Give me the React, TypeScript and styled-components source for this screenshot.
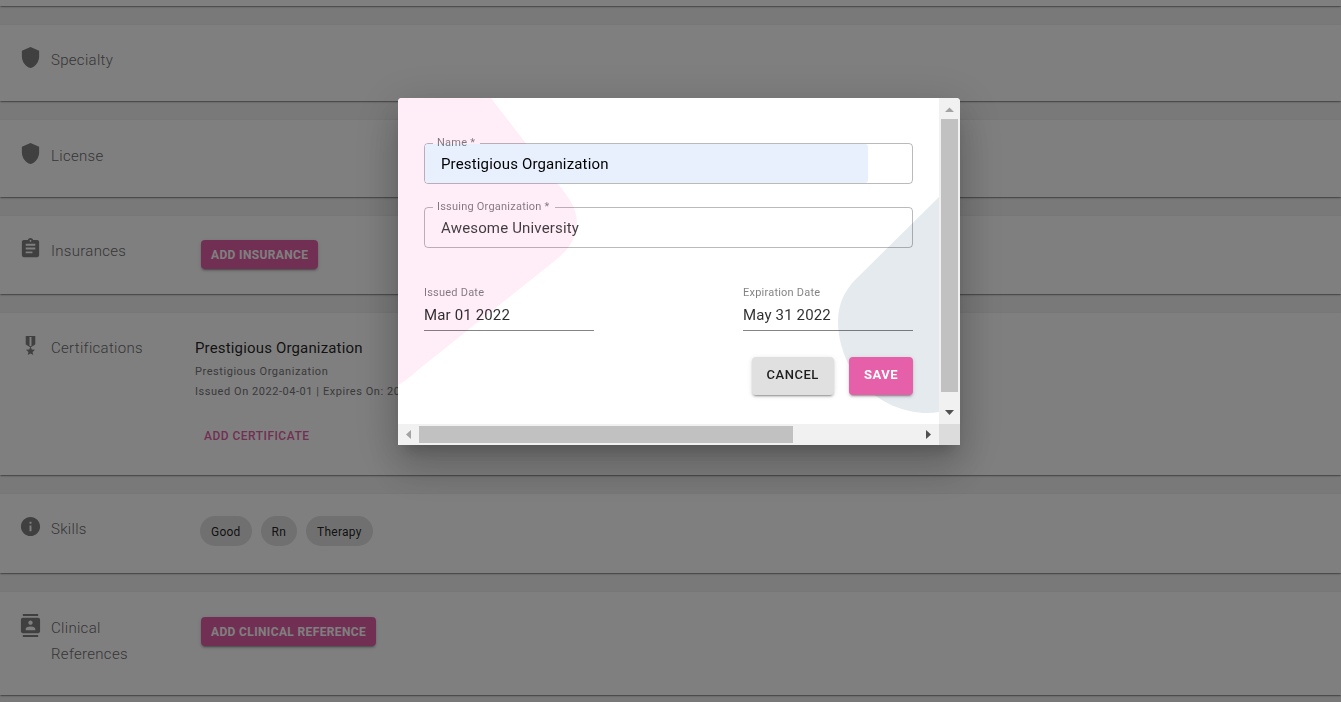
import React from "react";
import styled, { createGlobalStyle } from "styled-components";
import { MdAssignment, MdContacts, MdInfo, MdMilitaryTech, MdShield } from "react-icons/md";

const GlobalStyle = createGlobalStyle`
  *, *::before, *::after { box-sizing: border-box; }
  html, body, #root { height: 100%; }
  body {
    margin: 0;
    overflow: hidden;
    background: #f3f3f3;
    color: rgba(0, 0, 0, 0.87);
    font-family: Roboto, "Liberation Sans", sans-serif;
    letter-spacing: 0.01em;
  }
  button, input { font-family: inherit; letter-spacing: inherit; }
`;

const Page = styled.main`
  display: flex;
  flex-direction: column;
  gap: 19px;
  height: 100vh;
  overflow: hidden;
`;

const Card = styled.section<{ $height: number; $inset?: number }>`
  display: grid;
  grid-template-columns: 20px 133px 1fr;
  column-gap: 11px;
  align-items: start;
  flex: none;
  min-height: ${(p) => p.$height}px;
  padding: ${(p) => p.$inset ?? 0}px 20px 0;
  background: #fff;
  box-shadow: 0 2px 1px -1px rgba(0, 0, 0, 0.2), 0 1px 1px rgba(0, 0, 0, 0.14),
    0 1px 3px rgba(0, 0, 0, 0.12);
`;

const IconSlot = styled.span`
  display: flex;
  justify-content: center;
  color: #808080;
  svg { flex: none; width: 23px; height: 23px; }
`;

const CardTitle = styled.h2`
  margin: 0;
  padding: 1px 30px 0 0;
  color: #6c6c6c;
  font-size: 15px;
  font-weight: 300;
  letter-spacing: 0.02em;
  line-height: 26px;
`;

const CardBody = styled.div`
  padding-top: 1px;
`;

const SmallButton = styled.button`
  display: block;
  height: 29px;
  margin: 2px 0 0 6px;
  padding: 1px 10px 0;
  border: 0;
  border-radius: 4px;
  background: #e55fa9;
  color: #fff;
  font-size: 12px;
  font-weight: 700;
  letter-spacing: 0.03em;
  line-height: 28px;
  text-transform: uppercase;
  box-shadow: 0 3px 1px -2px rgba(0, 0, 0, 0.2), 0 2px 2px rgba(0, 0, 0, 0.14),
    0 1px 5px rgba(0, 0, 0, 0.12);
`;

const TextButton = styled.button`
  display: block;
  margin: 24px 0 0;
  padding: 0 9px;
  border: 0;
  background: none;
  color: #e55fa9;
  font-size: 12px;
  font-weight: 500;
  letter-spacing: 0.04em;
  line-height: 20px;
  text-transform: uppercase;
`;

const EntryName = styled.h3`
  margin: 2px 0 3px;
  font-size: 15px;
  font-weight: 400;
  line-height: 22px;
`;

const EntryLine = styled.p`
  margin: 0;
  color: #757575;
  font-size: 11px;
  font-weight: 400;
  letter-spacing: 0.05em;
  line-height: 20px;
  white-space: nowrap;
`;

const ChipList = styled.ul`
  display: flex;
  gap: 9px;
  margin: 0;
  padding: 0 0 0 5px;
  list-style: none;
`;

const Chip = styled.li`
  height: 30px;
  padding: 0 11px;
  border-radius: 15px;
  background: #e0e0e0;
  font-size: 12px;
  letter-spacing: 0.02em;
  line-height: 32px;
`;

const Backdrop = styled.div`
  position: fixed;
  inset: 0;
  display: flex;
  justify-content: center;
  align-items: flex-start;
  padding: 98px 0 0 17px;
  background: rgba(0, 0, 0, 0.5);
`;

const Dialog = styled.div`
  display: grid;
  grid-template-columns: minmax(0, 1fr) 21px;
  grid-template-rows: auto 21px;
  width: 562px;
  max-width: 96%;
  overflow: hidden;
  border-radius: 4px 4px 0 0;
  background: #fff;
  box-shadow: 0 11px 15px -7px rgba(0, 0, 0, 0.2),
    0 24px 38px 3px rgba(0, 0, 0, 0.14), 0 9px 46px 8px rgba(0, 0, 0, 0.12);
`;

const Form = styled.form`
  position: relative;
  display: flex;
  flex-direction: column;
  padding: 38px 26px 29px;
`;

const Backdrawing = styled.svg`
  position: absolute;
  inset: 0;
  width: 100%;
  height: 100%;
`;

const OutlinedField = styled.fieldset`
  position: relative;
  display: flex;
  height: 48px;
  margin: 0 0 16px;
  padding: 0 0 0 8px;
  border: 1px solid rgba(0, 0, 0, 0.27);
  border-radius: 4px;
`;

const FieldLegend = styled.legend`
  position: relative;
  z-index: 1;
  padding: 0 5px 0 4px;
  color: rgba(0, 0, 0, 0.5);
  font-size: 11px;
  letter-spacing: 0.02em;
  line-height: 14px;
`;

const FieldInput = styled.input<{ $autofilled?: boolean }>`
  flex: 1;
  min-width: 0;
  height: 39px;
  margin: -6px 44px 0 -8px;
  padding: 1px 16px 0;
  border: 0;
  border-radius: 3px;
  outline: 0;
  background: ${(p) => (p.$autofilled ? "#e8f0fe" : "transparent")};
  color: ${(p) => (p.$autofilled ? "#000" : "rgba(0, 0, 0, 0.75)")};
  font-size: 15px;
`;

const DateRow = styled.div`
  position: relative;
  display: flex;
  justify-content: space-between;
  margin-top: 22px;
`;

const DateField = styled.label`
  display: flex;
  flex-direction: column;
  width: 170px;
  color: rgba(0, 0, 0, 0.5);
  font-size: 11px;
  letter-spacing: 0.02em;
  line-height: 14px;
`;

const DateInput = styled.input`
  width: 100%;
  height: 31px;
  padding: 0;
  border: 0;
  border-bottom: 1px solid rgba(0, 0, 0, 0.48);
  outline: 0;
  background: transparent;
  color: rgba(0, 0, 0, 0.82);
  font-size: 15px;
  letter-spacing: 0.01em;
`;

const Actions = styled.div`
  position: relative;
  display: flex;
  justify-content: flex-end;
  gap: 15px;
  margin-top: 26px;
`;

const ActionButton = styled.button<{ $primary?: boolean }>`
  height: 38px;
  padding: 0 15px 3px;
  border: 0;
  border-radius: 4px;
  background: ${(p) => (p.$primary ? "#e55fa9" : "#e0e0e0")};
  color: ${(p) => (p.$primary ? "#fff" : "rgba(0, 0, 0, 0.87)")};
  font-size: 13px;
  font-weight: ${(p) => (p.$primary ? 700 : 500)};
  letter-spacing: 0.04em;
  text-transform: uppercase;
  box-shadow: 0 3px 1px -2px rgba(0, 0, 0, 0.2), 0 2px 2px rgba(0, 0, 0, 0.14),
    0 1px 5px rgba(0, 0, 0, 0.12);
`;

const ScrollTrack = styled.div<{ $vertical?: boolean }>`
  display: flex;
  flex-direction: ${(p) => (p.$vertical ? "column" : "row")};
  background: #f1f1f1;
`;

const ScrollRail = styled.div<{ $vertical?: boolean }>`
  display: flex;
  flex-direction: ${(p) => (p.$vertical ? "column" : "row")};
  flex: 1;
  padding: ${(p) => (p.$vertical ? "0 2px" : "2px 0")};
`;

const ScrollThumb = styled.div<{ $share: number }>`
  flex: 0 0 ${(p) => p.$share}%;
  background: #c1c1c1;
`;

const ScrollArrow = styled.button`
  display: flex;
  width: 21px;
  height: 21px;
  padding: 0;
  border: 0;
  background: none;
`;

const ScrollCorner = styled.div`
  background: #dcdcdc;
`;

const arrows = {
  up: { d: "M6 14h9L10.500 9.500z", fill: "#a3a3a3" },
  down: { d: "M6 7h9L10.500 12z", fill: "#505050" },
  left: { d: "M13 6v9L8 10.500z", fill: "#a3a3a3" },
  right: { d: "M8 6v9l5-4.500z", fill: "#505050" },
};

function Arrow({ to }: { to: keyof typeof arrows }) {
  return (
    <ScrollArrow type="button" aria-label={`Scroll ${to}`}>
      <svg width="21" height="21" viewBox="0 0 21 21">
        <path d={arrows[to].d} fill={arrows[to].fill} />
      </svg>
    </ScrollArrow>
  );
}

function Row({
  icon,
  title,
  height,
  inset = 21,
  children,
}: {
  icon: React.ReactNode;
  title: string;
  height: number;
  inset?: number;
  children?: React.ReactNode;
}) {
  return (
    <Card $height={height} $inset={inset}>
      <IconSlot>{icon}</IconSlot>
      <CardTitle>{title}</CardTitle>
      <CardBody>{children}</CardBody>
    </Card>
  );
}

export default function App() {
  return (
    <>
      <GlobalStyle />
      <Page>
        <Card $height={6} />
        <Row icon={<MdShield />} title="Specialty" height={76} />
        <Row icon={<MdShield />} title="License" height={77} inset={22} />
        <Row icon={<MdAssignment />} title="Insurances" height={78}>
          <SmallButton type="button">Add Insurance</SmallButton>
        </Row>
        <Row icon={<MdMilitaryTech />} title="Certifications" height={162}>
          <EntryName>Prestigious Organization</EntryName>
          <EntryLine>Prestigious Organization</EntryLine>
          <EntryLine>Issued On 2022-04-01 | Expires On: 2022-05-31</EntryLine>
          <TextButton type="button">Add Certificate</TextButton>
        </Row>
        <Row icon={<MdInfo />} title="Skills" height={79}>
          <ChipList>
            <Chip>Good</Chip>
            <Chip>Rn</Chip>
            <Chip>Therapy</Chip>
          </ChipList>
        </Row>
        <Row icon={<MdContacts />} title="Clinical References" height={103} inset={22}>
          <SmallButton type="button">Add Clinical Reference</SmallButton>
        </Row>
        <Card $height={76} />
      </Page>
      <Backdrop>
        <Dialog role="dialog" aria-modal="true" aria-label="Certification">
          <Form>
            <Backdrawing viewBox="0 0 541 326" preserveAspectRatio="none" aria-hidden="true">
              <path
                d="M0 0H93L157 83C172 99 179 112 179 125C179 139 172 150 159 161L20 272Q8 283 0 287Z"
                fill="#ffeef8"
              />
              <path
                d="M541 99L458 181C446 193 440 207 440 223C440 273 480 315 530 315Q536 315 541 314Z"
                fill="#e5eaef"
              />
            </Backdrawing>
            <OutlinedField>
              <FieldLegend>
                <label htmlFor="name">Name *</label>
              </FieldLegend>
              <FieldInput id="name" $autofilled defaultValue="Prestigious Organization" />
            </OutlinedField>
            <OutlinedField>
              <FieldLegend>
                <label htmlFor="organization">Issuing Organization *</label>
              </FieldLegend>
              <FieldInput id="organization" defaultValue="Awesome University" />
            </OutlinedField>
            <DateRow>
              <DateField>
                Issued Date
                <DateInput defaultValue="Mar 01 2022" />
              </DateField>
              <DateField>
                Expiration Date
                <DateInput defaultValue="May 31 2022" />
              </DateField>
            </DateRow>
            <Actions>
              <ActionButton type="button">Cancel</ActionButton>
              <ActionButton type="button" $primary>
                Save
              </ActionButton>
            </Actions>
          </Form>
          <ScrollTrack $vertical>
            <Arrow to="up" />
            <ScrollRail $vertical>
              <ScrollThumb $share={96} />
            </ScrollRail>
            <Arrow to="down" />
          </ScrollTrack>
          <ScrollTrack>
            <Arrow to="left" />
            <ScrollRail>
              <ScrollThumb $share={75} />
            </ScrollRail>
            <Arrow to="right" />
          </ScrollTrack>
          <ScrollCorner />
        </Dialog>
      </Backdrop>
    </>
  );
}
